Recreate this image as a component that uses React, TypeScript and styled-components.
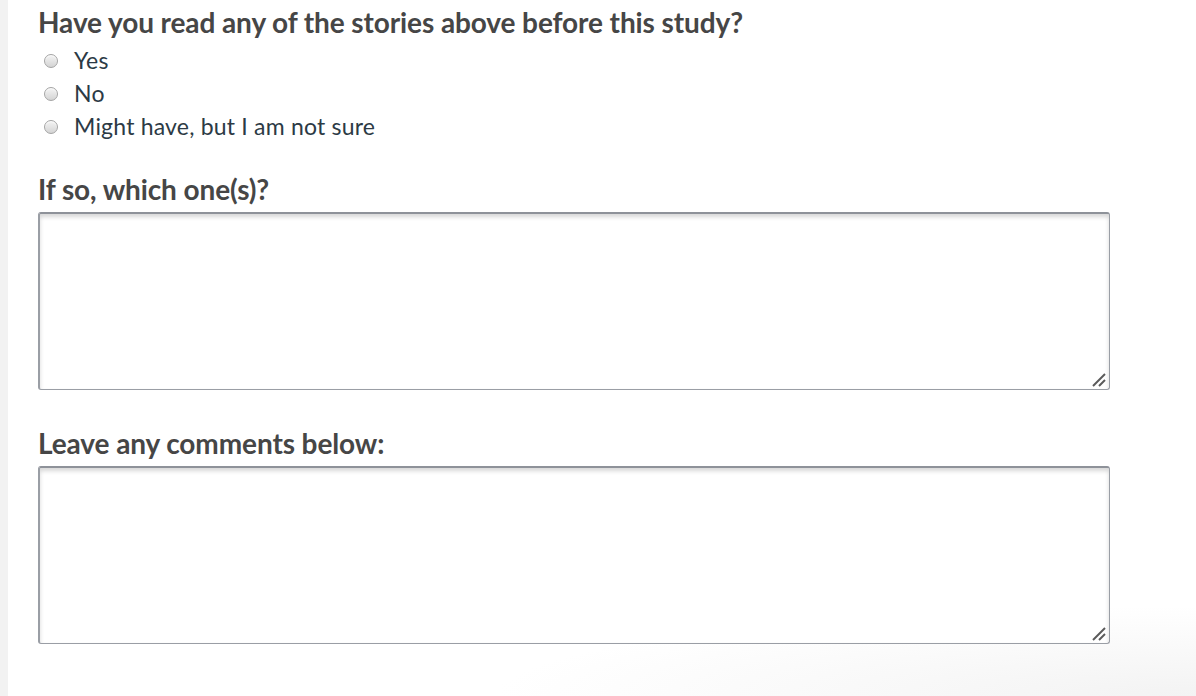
import React from "react";
import styled, { createGlobalStyle } from "styled-components";

const Global = createGlobalStyle`
  html, body { margin: 0; padding: 0; background: #ffffff; }
  body { font-family: Lato, "Open Sans", sans-serif; }
`;

const Page = styled.div`
  display: flex;
  width: 1196px;
  height: 696px;
  overflow: hidden;
  background: radial-gradient(ellipse 700px 90px at 1196px 696px, #f3f3f3 0%, #ffffff 100%);
`;

const SideStrip = styled.div`
  width: 8px;
  flex: none;
  background: #f2f2f2;
`;

const Content = styled.div`
  flex: 1;
  padding: 5px 86px 0 30px;
  display: flex;
  flex-direction: column;
`;

const Question = styled.div<{ $mt?: number }>`
  font-family: Lato, sans-serif;
  font-weight: 700;
  font-size: 28px;
  line-height: 34px;
  color: #464646;
  letter-spacing: -0.1px;
  margin-top: ${(p) => p.$mt ?? 0}px;
`;

const Options = styled.div`
  display: flex;
  flex-direction: column;
  margin-top: 4px;
`;

const Option = styled.label`
  display: flex;
  align-items: center;
  height: 33px;
  font-family: Lato, sans-serif;
  font-size: 23px;
  color: #2c3a45;
  letter-spacing: 0.2px;
`;

const Radio = styled.span`
  width: 14px;
  height: 14px;
  flex: none;
  border-radius: 50%;
  margin: 2px 16px 0 6px;
  box-sizing: border-box;
  border: 1px solid #a4a4a4;
  background: linear-gradient(#f4f4f4, #d4d4d4);
  box-shadow: inset 0 1px 1px rgba(255, 255, 255, 0.8);
`;

const Area = styled.div`
  position: relative;
  margin-top: 6px;
  height: 178px;
  box-sizing: border-box;
  border: 1px solid #9a9ea5;
  border-top: 2px solid #8e9299;
  border-left-width: 2px;
  border-radius: 3px;
  background: #ffffff;
  box-shadow: inset 0 3px 4px rgba(0, 0, 0, 0.16);
`;

const Grip = styled.svg`
  position: absolute;
  right: 3px;
  bottom: 2px;
`;

function TextArea() {
  return (
    <Area>
      <Grip width="14" height="14" viewBox="0 0 14 14">
        <line x1="1" y1="13" x2="13" y2="1" stroke="#5a5a5a" strokeWidth="2" />
        <line x1="7" y1="13" x2="13" y2="7" stroke="#5a5a5a" strokeWidth="2" />
      </Grip>
    </Area>
  );
}

export default function App() {
  return (
    <>
      <Global />
      <Page>
        <SideStrip />
        <Content>
          <Question>Have you read any of the stories above before this study?</Question>
          <Options>
            <Option><Radio />Yes</Option>
            <Option><Radio />No</Option>
            <Option><Radio />Might have, but I am not sure</Option>
          </Options>
          <Question $mt={30}>If so, which one(s)?</Question>
          <TextArea />
          <Question $mt={36}>Leave any comments below:</Question>
          <TextArea />
        </Content>
      </Page>
    </>
  );
}
